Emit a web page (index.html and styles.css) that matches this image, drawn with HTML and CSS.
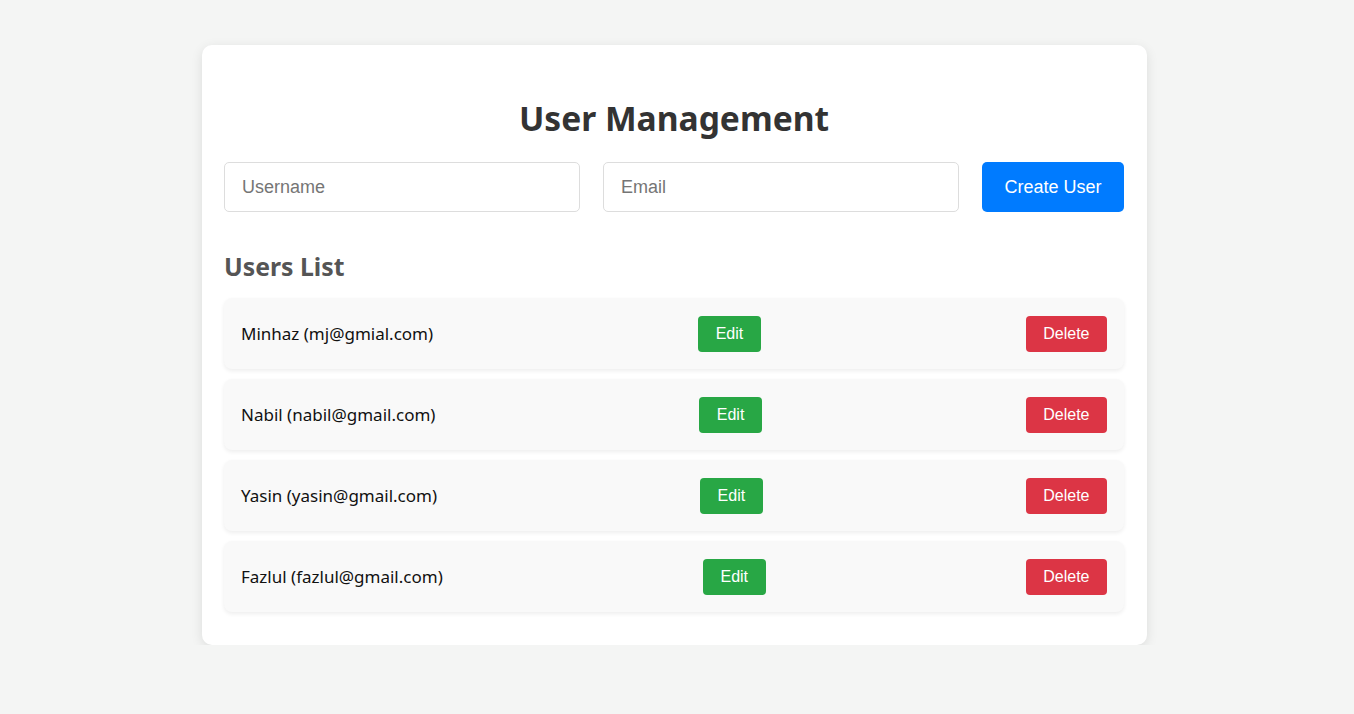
FILE: index.html
```html
<!DOCTYPE html>
<html lang="en">
<head>
<meta charset="utf-8">
<title>User Management</title>
<link rel="stylesheet" href="styles.css">
</head>
<body>
<div class="page">
  <main class="card">
    <h1 class="title">User Management</h1>
    <form class="create-form">
      <input class="field" type="text" placeholder="Username">
      <input class="field" type="email" placeholder="Email">
      <button class="btn btn-create" type="button">Create User</button>
    </form>
    <h2 class="subtitle">Users List</h2>
    <ul class="user-list">
      <li class="user-row"><span class="user-name">Minhaz (mj@gmial.com)</span><button class="btn btn-edit" type="button">Edit</button><button class="btn btn-delete" type="button">Delete</button></li>
      <li class="user-row"><span class="user-name">Nabil (nabil@gmail.com)</span><button class="btn btn-edit" type="button">Edit</button><button class="btn btn-delete" type="button">Delete</button></li>
      <li class="user-row"><span class="user-name">Yasin (yasin@gmail.com)</span><button class="btn btn-edit" type="button">Edit</button><button class="btn btn-delete" type="button">Delete</button></li>
      <li class="user-row"><span class="user-name">Fazlul (fazlul@gmail.com)</span><button class="btn btn-edit" type="button">Edit</button><button class="btn btn-delete" type="button">Delete</button></li>
    </ul>
  </main>
</div>
</body>
</html>
```
FILE: styles.css
```css
* { box-sizing: border-box; }
html, body { margin: 0; padding: 0; }
body {
  background: #f4f5f4;
  font-family: "Noto Sans", "Open Sans", sans-serif;
  color: #111;
}
.page {
  display: flex;
  justify-content: center;
  padding: 45px 5px 0 0;
}
.card {
  width: 945px;
  background: #fff;
  border-radius: 10px;
  box-shadow: 0 3px 12px rgba(0,0,0,0.1);
  padding: 22px 23px 22px 22px;
}
.title {
  margin: 31px 0 24px;
  text-align: center;
  font-size: 33.6px;
  line-height: 40px;
  font-weight: 700;
  color: #333;
}
.create-form {
  display: flex;
  gap: 23px;
  margin: 0;
}
.field {
  flex: 1;
  min-width: 0;
  height: 50px;
  border: 1px solid #ddd;
  border-radius: 5px;
  padding: 0 17px;
  font-family: "Liberation Sans", Arial, sans-serif;
  font-size: 18px;
  color: #333;
  background: #fff;
  outline: none;
}
.field::placeholder { color: #757575; }
.btn {
  border: none;
  color: #fff;
  font-family: "Liberation Sans", Arial, sans-serif;
  cursor: pointer;
}
.btn-create {
  width: 142px;
  height: 50px;
  border-radius: 5px;
  background: #007bff;
  font-size: 18px;
}
.subtitle {
  margin: 38px 0 16px;
  font-size: 24.8px;
  line-height: 32px;
  font-weight: 700;
  color: #555;
}
.user-list {
  list-style: none;
  margin: 0;
  padding: 0 0 1px;
}
.user-row {
  display: flex;
  align-items: center;
  justify-content: space-between;
  height: 71px;
  padding: 0 17px;
  margin-bottom: 10px;
  background: #f9f9f9;
  border-radius: 8px;
  box-shadow: 0 2px 4px rgba(0,0,0,0.07);
}
.user-name {
  font-size: 17px;
  color: #111;
}
.btn-edit, .btn-delete {
  height: 36px;
  padding: 0 17.5px;
  border-radius: 4px;
  font-size: 16px;
}
.btn-edit { background: #28a745; }
.btn-delete { background: #dc3545; }
```
